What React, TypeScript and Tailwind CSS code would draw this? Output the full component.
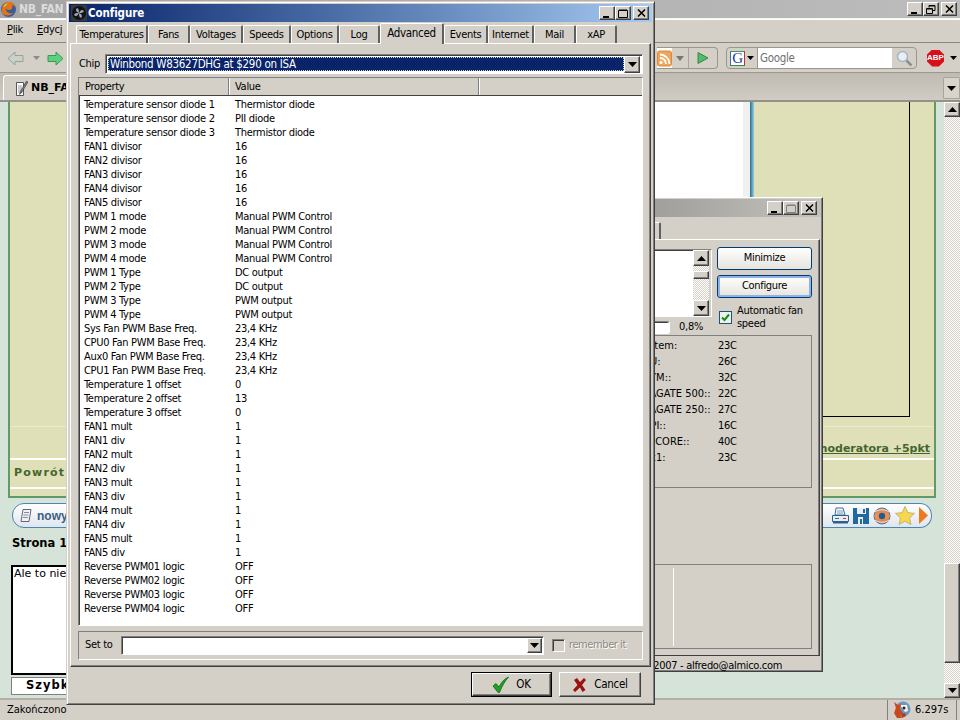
import React, { FC, ReactNode } from "react";

const raised =
  "bg-[#d4d0c8] border border-t-white border-l-white border-r-[#404040] border-b-[#404040] shadow-[inset_-1px_-1px_0_#808080]";
const sunken =
  "border border-t-[#808080] border-l-[#808080] border-r-white border-b-white shadow-[inset_1px_1px_0_#404040]";
const dither =
  "bg-[repeating-conic-gradient(#ffffff_0_25%,#d4d0c8_0_50%)] bg-[length:2px_2px]";
const verdana = "tracking-normal [font-family:'DejaVu_Sans','Liberation_Sans',sans-serif]";

const configRows: [string, string][] = [
  ["Temperature sensor diode 1", "Thermistor diode"],
  ["Temperature sensor diode 2", "PII diode"],
  ["Temperature sensor diode 3", "Thermistor diode"],
  ["FAN1 divisor", "16"],
  ["FAN2 divisor", "16"],
  ["FAN3 divisor", "16"],
  ["FAN4 divisor", "16"],
  ["FAN5 divisor", "16"],
  ["PWM 1 mode", "Manual PWM Control"],
  ["PWM 2 mode", "Manual PWM Control"],
  ["PWM 3 mode", "Manual PWM Control"],
  ["PWM 4 mode", "Manual PWM Control"],
  ["PWM 1 Type", "DC output"],
  ["PWM 2 Type", "DC output"],
  ["PWM 3 Type", "PWM output"],
  ["PWM 4 Type", "PWM output"],
  ["Sys Fan PWM Base Freq.", "23,4 KHz"],
  ["CPU0 Fan PWM Base Freq.", "23,4 KHz"],
  ["Aux0 Fan PWM Base Freq.", "23,4 KHz"],
  ["CPU1 Fan PWM Base Freq.", "23,4 KHz"],
  ["Temperature 1 offset", "0"],
  ["Temperature 2 offset", "13"],
  ["Temperature 3 offset", "0"],
  ["FAN1 mult", "1"],
  ["FAN1 div", "1"],
  ["FAN2 mult", "1"],
  ["FAN2 div", "1"],
  ["FAN3 mult", "1"],
  ["FAN3 div", "1"],
  ["FAN4 mult", "1"],
  ["FAN4 div", "1"],
  ["FAN5 mult", "1"],
  ["FAN5 div", "1"],
  ["Reverse PWM01 logic", "OFF"],
  ["Reverse PWM02 logic", "OFF"],
  ["Reverse PWM03 logic", "OFF"],
  ["Reverse PWM04 logic", "OFF"],
];

const tabs: [string, number][] = [
  ["Temperatures", 72],
  ["Fans", 42],
  ["Voltages", 53],
  ["Speeds", 48],
  ["Options", 48],
  ["Log", 41],
];
const tabsAfter: [string, number][] = [
  ["Events", 44],
  ["Internet", 46],
  ["Mail", 42],
  ["xAP", 41],
];

const temps: [string, string][] = [
  ["System:", "23C"],
  ["CPU:", "26C"],
  ["ASYM::", "32C"],
  ["SEAGATE 500::", "22C"],
  ["SEAGATE 250::", "27C"],
  ["ACPI::", "16C"],
  ["HD CORE::", "40C"],
  ["Aux1:", "23C"],
];

const Arrow: FC<{ up?: boolean }> = ({ up }) => (
  <svg width="9" height="5" viewBox="0 0 9 5" className={up ? "rotate-180" : ""}>
    <path d="M0 0h9L4.5 5z" fill="#000" />
  </svg>
);

const WinButton: FC<{ children: ReactNode; faded?: boolean }> = ({ children, faded }) => (
  <div className={`flex h-[14px] w-[16px] items-center justify-center ${raised} ${faded ? "text-[#808080]" : "text-black"}`}>
    {children}
  </div>
);

const WinControls: FC<{ restore?: boolean; maxFaded?: boolean }> = ({ restore, maxFaded }) => (
  <div className="flex items-center">
    <WinButton>
      <svg width="10" height="9" viewBox="0 0 10 9"><path d="M1 7h6v2H1z" fill="currentColor" /></svg>
    </WinButton>
    <WinButton faded={maxFaded}>
      {restore ? (
        <svg width="10" height="9" viewBox="0 0 10 9" fill="none" stroke="currentColor">
          <path d="M3 2.5V.5h6v5H7M.5 3.5h6v5h-6z" />
          <path d="M3 1h6M1 4h5" />
        </svg>
      ) : (
        <svg width="10" height="9" viewBox="0 0 10 9" fill="none" stroke="currentColor">
          <path d="M.5 1.5h9v7h-9zM1 1h8" />
        </svg>
      )}
    </WinButton>
    <div className="w-[2px]" />
    <WinButton>
      <svg width="9" height="8" viewBox="0 0 9 8" fill="none" stroke="currentColor" strokeWidth="1.5">
        <path d="M1 .5 8 7.5M8 .5 1 7.5" />
      </svg>
    </WinButton>
  </div>
);

const FirefoxIcon = () => (
  <svg width="17" height="17" viewBox="0 0 17 17">
    <circle cx="8.5" cy="8.5" r="7.5" fill="#3b5c9c" />
    <path d="M2 12C1 7 3 2 8 1c4-.5 7 2 8 6-1-2-3-3-4-3 1 2 0 5-3 5-2 0-3-1-3-2-1 1 0 4 3 5 2 .6 4 0 5-1-2 3-6 4-9 3-1.500-.5-2.500-1-3-2z" fill="#e0761b" />
    <path d="M3 6c1-2 3-4 5-4-1 1-2 2-2 3z" fill="#f3b43c" />
  </svg>
);

const FanIcon = () => (
  <svg width="16" height="16" viewBox="0 0 16 16">
    <rect width="16" height="16" rx="1" fill="#3a3a3a" />
    <circle cx="8" cy="8" r="7" fill="#141414" />
    <path d="M8 8C6 7 4 5.500 5.500 3.500 7.500 2.500 8 5 8 8zM8 8c1-2 2.500-4 4.500-2.500 1 2-1.500 2.500-4.500 2.500zM8 8c2 1 4 2.500 2.500 4.500C8.500 13.500 8 11 8 8zM8 8c-1 2-2.500 4-4.500 2.500C2.500 8.500 5 8 8 8z" fill="#9aa6b2" />
  </svg>
);

const NavArrow: FC<{ back?: boolean; fill: string; stroke: string }> = ({ back, fill, stroke }) => (
  <svg width="17" height="15" viewBox="0 0 17 15" className={back ? "-scale-x-100" : ""}>
    <path d="M1 4.500h8V1l7 6.500-7 6.500v-3.500H1z" fill={fill} stroke={stroke} />
  </svg>
);

const PageIcon = () => (
  <svg width="13" height="17" viewBox="0 0 13 17">
    <path d="M1.500 2.500h7v13h-7z" fill="#fff" stroke="#555" />
    <path d="M3 6h4M3 8h4M3 10h4M3 12h4" stroke="#999" />
    <path d="M11.500 1 5 12l-.5 2.500L6.500 13 13 2z" fill="#777" stroke="#333" strokeWidth=".5" />
  </svg>
);

const OkCheck: FC<{ size: number; color: string; dark: string }> = ({ size, color, dark }) => (
  <svg width={size} height={size} viewBox="0 0 18 18">
    <path d="M1 10l3-2.500 3 3.500C9 7 12 3 16.500 1 13 5 10 10 7.500 16.500H6z" fill={color} stroke={dark} strokeWidth=".8" />
  </svg>
);

const FoxIcon = () => (
  <svg width="18" height="18" viewBox="0 0 18 18">
    <circle cx="10" cy="8" r="7.500" fill="#6d97c0" />
    <path d="M7 4h7l1 6-3 1z" fill="#f3f3f3" />
    <circle cx="11" cy="7" r="1.500" fill="#223" />
    <path d="M1 1l4 3 3-1-1 5 3 4-3 2 2 3H4L1 12l2-5z" fill="#c9481c" />
    <path d="M8 13l4-1 1 3-4 2z" fill="#b33c16" />
  </svg>
);

const PrintIcon = () => (
  <svg width="17" height="18" viewBox="0 0 17 18">
    <path d="M4 1h7l2 7H3z" fill="#f4f7fb" stroke="#3f6f9f" />
    <path d="M5 4h6M5 6h6" stroke="#7a9cc0" />
    <path d="M.5 8.500h16v6H.5z" fill="#e8edf2" stroke="#2f5f90" />
    <path d="M1 15.500h15" stroke="#2f5f90" strokeWidth="2" />
    <path d="M3 11.500h4" stroke="#2f6fa0" />
    <path d="M11 11.500h3" stroke="#d03030" />
  </svg>
);

const SaveIcon = () => (
  <svg width="16" height="16" viewBox="0 0 16 16">
    <path d="M0 0h16v16H0z" fill="#1f6aa0" />
    <path d="M4 0h9v6H4z" fill="#e8f0f6" />
    <path d="M10 1h2v4h-2z" fill="#1f6aa0" />
    <path d="M5 9h5v7H5z" fill="#e8f0f6" />
    <path d="M7 11h2v5H7z" fill="#1f6aa0" />
  </svg>
);

const EyeIcon = () => (
  <svg width="18" height="18" viewBox="0 0 18 18">
    <circle cx="9" cy="9" r="8" fill="#e8854a" stroke="#3f7fa8" />
    <path d="M1 9c3-5 13-5 16 0-3 5-13 5-16 0z" fill="#f09058" />
    <circle cx="9" cy="9" r="3.200" fill="#1f5f8a" />
    <path d="M2 5c4-3 10-3 14 0M2 13c4 3 10 3 14 0" stroke="#dfeaf2" fill="none" />
  </svg>
);

const StarIcon = () => (
  <svg width="20" height="19" viewBox="0 0 20 19">
    <path d="M10 .5l2.800 6.200 6.700.7-5 4.500 1.400 6.600L10 15.100l-5.900 3.400 1.400-6.600-5-4.500 6.700-.7z" fill="#f7d84a" stroke="#c9b070" />
  </svg>
);

const PropertyList = () => (
  <div className={`h-[549px] overflow-hidden bg-white ${sunken}`}>
    <div className="flex h-[18px] border-b border-[#404040] bg-[#d4d0c8] leading-[17px]">
      <div className="w-[150px] border-r border-[#808080] pl-[6px] shadow-[1px_0_0_#fff]">Property</div>
      <div className="w-[250px] border-r border-[#808080] pl-[6px] shadow-[1px_0_0_#fff]">Value</div>
    </div>
    <div className="pt-[2px]">
      {configRows.map(([name, value]) => (
        <div key={name} className="flex h-[14px] leading-[14px]">
          <div className="w-[156px] pl-[5px]">{name}</div>
          <div>{value}</div>
        </div>
      ))}
    </div>
  </div>
);

const ConfigureWindow = () => (
  <div className="absolute left-[66px] top-[1px] flex h-[704px] w-[589px] flex-col border border-r-[#404040] border-b-[#404040] border-t-[#d4d0c8] border-l-[#d4d0c8] bg-[#d4d0c8] p-[2px] shadow-[inset_1px_1px_0_#fff,inset_-1px_-1px_0_#808080]">
    <div className="flex h-[18px] shrink-0 items-center bg-gradient-to-r from-[#0a246a] to-[#a6caf0] pl-[2px] pr-[3px] text-white">
      <FanIcon />
      <div className="ml-[1px] flex-1 text-[11.500px] font-bold leading-[18px] tracking-[-0.1px]">Configure</div>
      <WinControls />
    </div>
    <div className="flex h-[21px] shrink-0 items-end pl-[7px]">
      {tabs.map(([label, w]) => (
        <div key={label} style={{ width: w }} className="flex h-[18px] items-center justify-center rounded-t-[2px] border-l border-t border-r-2 border-l-white border-t-white border-r-[#606060] leading-[16px]">
          {label}
        </div>
      ))}
      <div className="relative z-10 -mb-px flex h-[21px] w-[64px] items-start justify-center rounded-t-[2px] border-l border-t border-r-2 border-l-white border-t-white border-r-[#606060] bg-[#d4d0c8] pt-[1px] text-[11.500px]">
        Advanced
      </div>
      {tabsAfter.map(([label, w]) => (
        <div key={label} style={{ width: w }} className="flex h-[18px] items-center justify-center rounded-t-[2px] border-l border-t border-r-2 border-l-white border-t-white border-r-[#606060] leading-[16px]">
          {label}
        </div>
      ))}
    </div>
    <div className="mx-[1px] flex h-[624px] shrink-0 flex-col border border-t-white border-l-white border-r-[#404040] border-b-[#404040] px-[7px] pt-[10px] shadow-[inset_-1px_-1px_0_#808080]">
      <div className="flex h-[20px] items-center">
        <div className="w-[27px] pl-[1px]">Chip</div>
        <div className={`flex h-[20px] flex-1 items-center bg-white p-[2px] ${sunken}`}>
          <div className="h-full flex-1 border border-dotted border-[#d4d0c8] bg-[#0a246a] pl-[1px] text-[11.500px] leading-[13px] text-white">
            Winbond W83627DHG at $290 on ISA
          </div>
          <div className={`flex h-[17px] w-[16px] items-center justify-center ${raised}`}>
            <Arrow />
          </div>
        </div>
      </div>
      <div className="mt-[3px]">
        <PropertyList />
      </div>
      <div className="mt-[5px] flex h-[29px] items-center border border-t-[#808080] border-l-[#808080] border-r-white border-b-white pl-[6px]">
        <div className="w-[36px]">Set to</div>
        <div className={`flex h-[19px] w-[423px] shrink-0 items-center justify-end bg-white pr-[1px] ${sunken}`}>
          <div className={`flex h-[15px] w-[15px] items-center justify-center ${raised}`}>
            <Arrow />
          </div>
        </div>
        <div className={`ml-[8px] h-[13px] w-[13px] shrink-0 ${sunken}`} />
        <div className="ml-[4px] whitespace-nowrap tracking-[-0.4px] text-[#8d8a84] [text-shadow:1px_1px_0_#ffffff]">remember it</div>
      </div>
    </div>
    <div className="flex flex-1 items-start justify-end gap-[7px] pr-[11px] pt-[5px]">
      <div className="border border-black">
        <div className={`flex h-[23px] w-[79px] items-center justify-center gap-[6px] ${raised}`}>
          <OkCheck size={18} color="#22a022" dark="#0f6a0f" />
          <span className="text-[11.500px]">OK</span>
        </div>
      </div>
      <div className={`flex h-[25px] w-[82px] items-center justify-center gap-[6px] ${raised}`}>
        <svg width="16" height="16" viewBox="0 0 16 16">
          <path d="M2 3l3-2 3 4 4-4 2 2-4 5 3.500 5-3 2L8 10.500 3 15l-2-2 4.500-5z" fill="#9c1010" />
        </svg>
        <span className="text-[11.500px]">Cancel</span>
      </div>
    </div>
  </div>
);

const SpeedFanWindow = () => (
  <div className="absolute left-[500px] top-[197px] flex h-[475px] w-[323px] flex-col border border-r-[#404040] border-b-[#404040] border-t-white border-l-white bg-[#d4d0c8] p-[1px] shadow-[inset_-1px_-1px_0_#808080]">
    <div className="flex h-[18px] shrink-0 items-center justify-end bg-gradient-to-r from-[#808080] to-[#c4c2bc] pr-[4px]">
      <WinControls maxFaded />
    </div>
    <div className="flex h-[22px] shrink-0 items-end">
      <div className="ml-[120px] h-[17px] w-[39px] rounded-tr-[2px] border-r-2 border-t border-r-[#606060] border-t-white" />
    </div>
    <div className="ml-[5px] mr-[1px] flex h-[417px] shrink-0 flex-col border border-t-white border-l-white border-r-[#404040] border-b-[#404040] pt-[7px] pr-[7px] shadow-[inset_-1px_0_0_#808080]">
      <div className="flex h-[88px] justify-end">
        <div className="flex w-[200px] flex-col items-end">
          <div className={`mt-[2px] flex h-[68px] w-full justify-end bg-white ${sunken}`}>
            <div className={`flex w-[16px] flex-col ${dither}`}>
              <div className={`flex h-[16px] items-center justify-center ${raised}`}>
                <Arrow up />
              </div>
              <div className={`mt-[5px] h-[8px] ${raised}`} />
              <div className="flex-1" />
              <div className={`flex h-[16px] items-center justify-center ${raised}`}>
                <Arrow />
              </div>
            </div>
            <div className="w-[2px] bg-[#d4d0c8]" />
          </div>
          <div className="mt-[3px] flex h-[14px] w-full items-center justify-end pr-[9px]">
            <div className={`mr-[9px] h-[13px] w-[40px] rounded-r-[3px] bg-white ${sunken}`} />
            <div>0,8%</div>
          </div>
        </div>
        <div className="ml-[5px] w-[95px]">
          <div className="flex h-[23px] items-center justify-center rounded-[3px] border border-[#003c74] bg-gradient-to-b from-white to-[#e6e4dc]">
            Minimize
          </div>
          <div className="mt-[5px] flex h-[23px] items-center justify-center rounded-[3px] border border-[#003c74] bg-gradient-to-b from-white to-[#e6e4dc] shadow-[inset_0_0_0_2px_#8fb0e8]">
            Configure
          </div>
          <div className="mt-[6px] flex items-center pl-[2px]">
            <div className="flex h-[13px] w-[13px] shrink-0 items-center justify-center border border-[#1c5180] bg-[#eef0ea]">
              <svg width="9" height="9" viewBox="0 0 9 9">
                <path d="M1 4.500l2.500 2.500L8 1.500" fill="none" stroke="#1a8a1a" strokeWidth="2" />
              </svg>
            </div>
            <div className="ml-[5px] leading-[13px]">Automatic fan speed</div>
          </div>
        </div>
      </div>
      <div className="ml-[6px] h-[153px] border border-[#808080] pl-[122px] pt-[2px]">
        {temps.map(([label, value]) => (
          <div key={label} className="flex h-[16px] leading-[16px]">
            <div className="w-[81px] whitespace-nowrap tracking-normal">{label}</div>
            <div>{value}</div>
          </div>
        ))}
      </div>
      <div className="ml-[6px] mt-[76px] h-[85px] border border-[#808080] pl-[158px] pt-[3px]">
        <div className="h-[78px] w-px bg-white" />
      </div>
    </div>
    <div className="flex flex-1 justify-end whitespace-nowrap pr-[39px] pt-[3px] leading-[14px]">Copyright 2000-2007 - alfredo@almico.com</div>
  </div>
);

const ToolbarBar = () => (
  <div className="flex h-[30px] shrink-0 items-center border-b border-[#9c9890] bg-[#d4d0c8] pl-[7px] pr-[3px] pt-[1px]">
    <NavArrow back fill="#c8d2c8" stroke="#9aa09a" />
    <svg width="7" height="4" viewBox="0 0 7 4" className="ml-[9px]"><path d="M0 0h7L3.500 4z" fill="#8a8a8a" /></svg>
    <div className="ml-[7px]">
      <NavArrow fill="#5cd080" stroke="#3a9a50" />
    </div>
    <div className="ml-[593px] flex h-[22px] w-[61px] items-center rounded-r-[4px] border border-l-0 border-[#9a968e]">
      <div className="flex h-full w-[15px] items-center justify-center bg-white">
        <svg width="15" height="17" viewBox="0 0 15 17">
          <rect x="0.500" y="1" width="14" height="15" rx="2" fill="#f0a55a" stroke="#d98a3a" />
          <circle cx="4" cy="12.500" r="1.600" fill="#fff" />
          <path d="M3 8a6 6 0 0 1 6 6M3 4.500a9.500 9.500 0 0 1 9.500 9.500" fill="none" stroke="#fff" strokeWidth="1.800" />
        </svg>
      </div>
      <div className="flex h-full w-[17px] items-center justify-center border-r border-[#aaa69e]">
        <svg width="8" height="5" viewBox="0 0 8 5"><path d="M0 0h8L4 5z" fill="#777" /></svg>
      </div>
      <div className="flex flex-1 items-center justify-center">
        <svg width="12" height="12" viewBox="0 0 12 12"><path d="M1 .5 11 6 1 11.500z" fill="#58b86a" stroke="#2f8a48" /></svg>
      </div>
    </div>
    <div className="ml-[8px] flex h-[22px] w-[191px] items-center rounded-[4px] border border-[#9a968e]">
      <div className="flex h-full w-[31px] items-center justify-center gap-[2px] border-r border-[#9a968e]">
        <div className="flex h-[15px] w-[15px] items-center justify-center border border-l-[#2f6fc0] border-t-[#2f9f4f] border-r-[#c03030] border-b-[#2f8f3f] bg-white text-[15px] leading-none text-[#1c3a9a] [font-family:'Liberation_Serif',serif]">
          G
        </div>
        <svg width="7" height="4" viewBox="0 0 7 4"><path d="M0 0h7L3.500 4z" fill="#000" /></svg>
      </div>
      <div className="flex h-full w-[134px] items-center bg-white pl-[2px] pt-[2px] text-[11.500px] leading-none text-[#707070]">Google</div>
      <div className="flex flex-1 items-center justify-center">
        <svg width="17" height="17" viewBox="0 0 17 17" fill="none">
          <circle cx="6.500" cy="6.500" r="5" fill="#e6eef6" stroke="#a8b4c0" strokeWidth="1.500" />
          <path d="M10.500 10.500 15.500 15.500" stroke="#8a8f94" strokeWidth="2.500" />
        </svg>
      </div>
    </div>
    <div className="ml-[10px] flex h-[17px] w-[17px] items-center justify-center bg-[#d8101c] [clip-path:polygon(30%_0,70%_0,100%_30%,100%_70%,70%_100%,30%_100%,0_70%,0_30%)]">
      <span className="text-[8px] font-bold leading-none tracking-normal text-white [font-family:'Liberation_Sans',sans-serif]">ABP</span>
    </div>
    <svg width="7" height="4" viewBox="0 0 7 4" className="ml-[6px]"><path d="M0 0h7L3.500 4z" fill="#000" /></svg>
  </div>
);

const BrowserContent = () => (
  <div className="flex min-h-0 flex-1 bg-[#d6e3d8]">
    <div className="flex min-w-0 flex-1 flex-col pl-[8px] pr-[8px]">
      <div className="h-[396px] shrink-0 border-x-[2px] border-b-[2px] border-[#5f9a68] bg-[#dfdfb8]">
        <div className="flex h-[324px]">
          <div className="flex-1" />
          <div className="h-[100px] w-[88px] bg-white" />
          <div className="h-[100px] w-[7px] bg-[#f0f0f0]" />
          <div className="h-[324px] w-[4px] bg-gradient-to-r from-[#2f6f8a] to-[#8fd0e8]" />
          <div className="h-[315px] w-[156px] border-b border-r border-black" />
          <div className="w-[24px]" />
        </div>
        <div className={`flex h-[32px] items-end justify-end border-t border-[#ecebd0] pb-[1px] pr-[4px] text-[11px] font-bold text-[#44662e] ${verdana}`}>
          <span className="underline">moderatora +5pkt</span>
        </div>
        <div className="flex h-[29px] items-center border-t-2 border-white pl-[4px] text-[11px] font-bold tracking-[1.200px] text-[#44662e] [font-family:'DejaVu_Sans',sans-serif]">
          Powrót
        </div>
        <div className="border-t-2 border-white" />
      </div>
      <div className="mt-[5px] flex h-[25px] shrink-0 items-center justify-between pl-[4px] pr-[4px]">
        <div className="flex h-full w-[120px] items-center whitespace-nowrap rounded-[12px] border-[1.500px] border-[#4a86b0] bg-gradient-to-b from-white to-[#dfe6ee] pl-[6px] text-[12px] font-bold tracking-normal text-[#3b5f85] [font-family:'Liberation_Sans',sans-serif]">
          <svg width="15" height="15" viewBox="0 0 15 15" className="mr-[3px]">
            <path d="M4 1.500h8l-2 12H2z" fill="#eef2f6" stroke="#667" />
            <path d="M5 4.500h5M4.500 7h5M4 9.500h5" stroke="#889" />
          </svg>
          nowy
        </div>
        <div className="flex h-full w-[112px] items-center justify-end gap-[4px] rounded-r-[12px] border-[1.500px] border-l-0 border-[#4a86b0] bg-gradient-to-b from-white to-[#dfe6ee] pr-[3px]">
          <PrintIcon />
          <SaveIcon />
          <EyeIcon />
          <StarIcon />
          <svg width="9" height="17" viewBox="0 0 9 17"><path d="M0 0l9 8.500L0 17z" fill="#ee7a1c" /></svg>
        </div>
      </div>
      <div className={`ml-[4px] mt-[7px] h-[16px] shrink-0 text-[11.500px] font-bold leading-[16px] ${verdana}`}>Strona 1</div>
      <div className={`ml-[3px] mt-[14px] h-[110px] w-[300px] shrink-0 border-2 border-black bg-white pl-[1px] text-[11px] leading-[13px] ${verdana}`}>
        Ale to nie
      </div>
      <div className="ml-[3px] mt-[2px] flex h-[18px] w-[300px] shrink-0 items-center justify-start border border-[#808080] bg-white pl-[14px] text-[11.500px] font-bold tracking-[1px] [font-family:'DejaVu_Sans',sans-serif]">
        Szybk
      </div>
    </div>
    <div className={`flex w-[16px] shrink-0 flex-col ${dither}`}>
      <div className={`flex h-[15px] items-center justify-center ${raised}`}>
        <Arrow up />
      </div>
      <div className="h-[446px]" />
      <div className={`h-[100px] ${raised}`} />
      <div className="flex-1" />
      <div className={`flex h-[15px] items-center justify-center ${raised}`}>
        <Arrow />
      </div>
    </div>
  </div>
);

const App: FC = () => (
  <div className="relative h-[720px] w-[960px] overflow-hidden bg-[#d4d0c8] text-[11px] tracking-[-0.3px] text-black [font-family:'DejaVu_Sans_Condensed','Liberation_Sans',sans-serif]">
    <div className="flex h-full flex-col">
      <div className="flex h-[19px] shrink-0 items-center border-b border-[#f4f4f0] bg-gradient-to-r from-[#a4a4a4] to-[#bcbcbc] pr-[3px]">
        <FirefoxIcon />
        <div className="ml-[2px] flex-1 text-[12px] font-bold text-[#dcdcdc]">NB_FAN</div>
        <WinControls restore />
      </div>
      <div className="flex h-[24px] shrink-0 items-center gap-[14px] border-b border-[#8c8880] pl-[7px] text-[11px] shadow-[inset_0_1px_0_#fff]">
        <span><u>P</u>lik</span>
        <span><u>E</u>dycj</span>
      </div>
      <ToolbarBar />
      <div className="flex h-[29px] shrink-0 items-end border-b-2 border-[#94908a] bg-gradient-to-b from-[#bfbbb3] to-[#d0ccc4] pl-[3px]">
        <div className="flex h-[25px] w-[200px] items-center rounded-t-[3px] border border-b-0 border-white bg-[#d4d0c8] pl-[11px]">
          <PageIcon />
          <span className={`ml-[3px] text-[11px] font-bold ${verdana}`}>NB_FA</span>
        </div>
        <div className="flex-1" />
        <div className="mb-[1px] flex h-[22px] w-[17px] items-center justify-center rounded-t-[2px] border border-[#a8a49c] bg-[#d8d4cc]">
          <Arrow />
        </div>
      </div>
      <BrowserContent />
      <div className="flex h-[22px] shrink-0 items-center border-t-2 border-[#b4b0a8] pl-[7px] tracking-normal">
        <div className="flex-1">Zakończono</div>
        <div className="flex h-full w-[70px] items-center gap-[4px] border-x border-[#808080] pl-[5px]">
          <FoxIcon />
          6.297s
        </div>
        <div className="w-[3px]" />
      </div>
    </div>
    <SpeedFanWindow />
    <ConfigureWindow />
  </div>
);

export default App;
